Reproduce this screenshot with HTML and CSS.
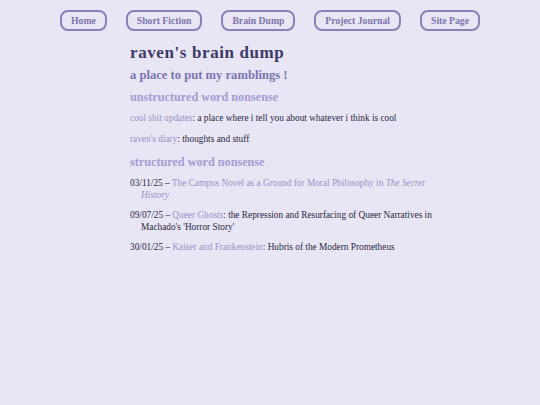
FILE: index.html
```html
<!DOCTYPE html>
<html lang="en">
<head>
    <meta charset="UTF-8">
    <meta name="viewport" content="width=device-width, initial-scale=1.0">
    <title>raven's brain dump</title>
    <link rel="stylesheet" href="styles.css">
</head>
<body>
    <!-- Navbar -->
    <nav class="navbar">
        <a href="#">Home</a>
        <a href="#">Short Fiction</a>
        <a href="#">Brain Dump</a>
        <a href="#">Project Journal</a>
        <a href="#">Site Page</a>
    </nav>

    <!-- Main -->
    <div class="content">
        <h1>raven's brain dump</h1>
        <h2>a place to put my ramblings !</h2>

        <h3>unstructured word nonsense</h3>
        <p><a href="#">cool shit updates</a>: a place where i tell you about whatever i think is cool</p>
        <p><a href="#">raven's diary</a>: thoughts and stuff</p>

        <h3>structured word nonsense</h3>
        <ul class="posts">
            <li>03/11/25 – <a href="#">The Campus Novel as a Ground for Moral Philosophy in <i>The Secret History</i></a></li>
            <li>09/07/25 – <a href="#">Queer Ghosts</a>: the Repression and Resurfacing of Queer Narratives in Machado's 'Horror Story'</li>
            <li>30/01/25 – <a href="#">Kaiser and Frankenstein</a>: Hubris of the Modern Prometheus</li>
        </ul>
    </div>
</body>
</html>
```

FILE: styles.css
```css
/* General */
* {
    margin: 0;
    padding: 0;
    box-sizing: border-box;
}

body {
    background-color: #e8e6f5;
    font-family: "Liberation Serif", serif;
    font-size: 9.3px;
    color: #2a2642;
}

a {
    text-decoration: none;
    color: #9a91c9;
}

/* Navbar */
.navbar {
    display: flex;
    justify-content: center;
    gap: 19px;
    padding-top: 10px;
}

.navbar a {
    display: block;
    height: 21px;
    line-height: 17px;
    padding: 0 9px;
    border: 2px solid #8a80b9;
    border-radius: 8px;
    font-size: 9.7px;
    font-weight: bold;
    color: #7d74ad;
}

/* Content */
.content {
    width: 320px;
    margin: 0 0 0 130px;
    padding-top: 12px;
}

h1 {
    font-size: 17px;
    letter-spacing: 0.6px;
    color: #3d3968;
    line-height: 20px;
}

h2 {
    font-size: 12.6px;
    color: #7a72b1;
    line-height: 18px;
    margin-top: 3px;
    margin-bottom: 5px;
}

h3 {
    font-size: 12.2px;
    color: #a49bd3;
    line-height: 16px;
    margin-top: 2px;
    margin-bottom: 7px;
}

p {
    line-height: 12px;
    margin-bottom: 9px;
}

p + h3 {
    margin-top: 1px;
}

.posts {
    list-style: none;
    margin-top: 5px;
}

.posts li {
    line-height: 12px;
    padding-left: 11px;
    text-indent: -11px;
    margin-bottom: 8px;
}
```
